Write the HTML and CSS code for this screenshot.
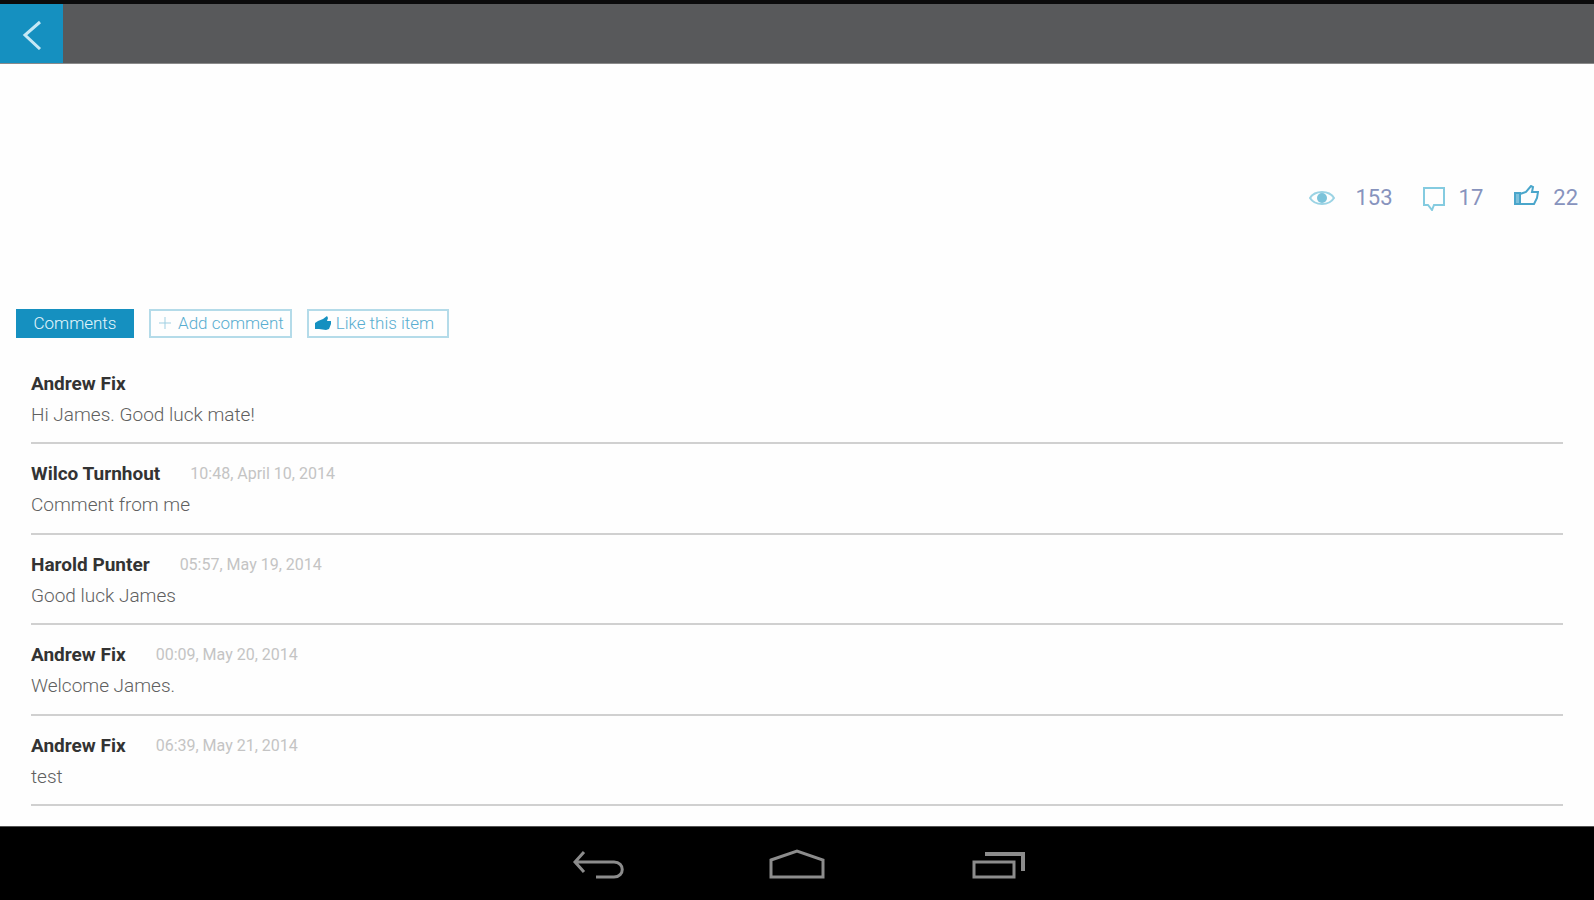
FILE: index.html
```html
<!DOCTYPE html>
<html lang="en">
<head>
  <meta charset="UTF-8">
  <meta name="viewport" content="width=device-width, initial-scale=1.0">
  <title>Comments</title>
  <link rel="stylesheet" href="styles.css">
</head>
<body>
  <header class="top-bar">
    <button class="back-button" type="button" aria-label="Back">
      <svg width="20" height="32" viewBox="0 0 20 32"><path d="M18 4 L3 17 L18 31"/></svg>
    </button>
  </header>

  <main class="content">
    <div class="stats">
      <span class="stat">
        <svg class="eye" width="26" height="18" viewBox="0 0 26 18">
          <path d="M1 9 C6 1 20 1 25 9 C20 17 6 17 1 9 Z"/>
          <circle cx="13" cy="9" r="5"/>
        </svg>
        153
      </span>
      <span class="stat">
        <svg class="bubble" width="22" height="26" viewBox="0 0 22 26">
          <path d="M1 3 H21 V20 H11 L9 25 L5 20 H1 Z"/>
        </svg>
        17
      </span>
      <span class="stat">
        <svg class="thumb" width="26" height="26" viewBox="0 0 26 26">
          <path class="cuff" d="M2 8 H7 V19 H2 Z"/>
          <path d="M7 9 L13 7 L18 1 L20 2 L19 7 H25 L24 13 L21 19 H7"/>
        </svg>
        22
      </span>
    </div>

    <div class="actions">
      <button class="action active" type="button">Comments</button>
      <button class="action" type="button">
        <svg width="16" height="16" viewBox="0 0 16 16"><path class="plus" d="M8 2 V14 M2 8 H14"/></svg>
        Add comment
      </button>
      <button class="action" type="button">
        <svg width="16" height="16" viewBox="0 0 16 16"><path d="M0 8 L3 6 L8 4 L12 1 L13 3 L12 6 H16 V9 L14 14 L11 15 L4 14 L0 14 Z"/></svg>
        Like this item
      </button>
    </div>

    <ul class="comments">
      <li class="comment">
        <div class="comment-head"><strong>Andrew Fix</strong></div>
        <p>Hi James. Good luck mate!</p>
      </li>
      <li class="comment">
        <div class="comment-head"><strong>Wilco Turnhout</strong><time>10:48, April 10, 2014</time></div>
        <p>Comment from me</p>
      </li>
      <li class="comment">
        <div class="comment-head"><strong>Harold Punter</strong><time>05:57, May 19, 2014</time></div>
        <p>Good luck James</p>
      </li>
      <li class="comment">
        <div class="comment-head"><strong>Andrew Fix</strong><time>00:09, May 20, 2014</time></div>
        <p>Welcome James.</p>
      </li>
      <li class="comment">
        <div class="comment-head"><strong>Andrew Fix</strong><time>06:39, May 21, 2014</time></div>
        <p>test</p>
      </li>
    </ul>
  </main>

  <nav class="system-bar">
    <button type="button" aria-label="Back">
      <svg width="56" height="32" viewBox="0 0 56 32"><path d="M15 4 L6 14 L15 24 M6 14 H45 C56 14 56 29 45 29 H27"/></svg>
    </button>
    <button type="button" aria-label="Home">
      <svg width="56" height="32" viewBox="0 0 56 32"><path d="M2 12 L28 3 L54 12 V29 H2 Z"/></svg>
    </button>
    <button type="button" aria-label="Recent apps">
      <svg width="56" height="32" viewBox="0 0 56 32"><path d="M5 14 H45 V29 H5 Z"/><path class="stacked" d="M16 6 H54 V23"/></svg>
    </button>
  </nav>
</body>
</html>
```

FILE: styles.css
```css
* {
  box-sizing: border-box;
}

body {
  margin: 0;
  min-height: 100vh;
  display: flex;
  flex-direction: column;
  font-family: Roboto, sans-serif;
  background-color: #fefefe;
  color: #777;
}

button {
  display: flex;
  align-items: center;
  justify-content: center;
  padding: 0;
  border: none;
  background: none;
  font-family: inherit;
  cursor: pointer;
}

svg {
  display: block;
  flex: none;
}

.top-bar {
  height: 64px;
  display: flex;
  border-top: 4px solid #0b0b0c;
  border-bottom: 1px solid #8a8a8a;
  background-color: #58595b;
}

.back-button {
  width: 63px;
  background-color: #1590c0;
}

.back-button path {
  fill: none;
  stroke: #c5e8f5;
  stroke-width: 3;
}

.content {
  flex: 1;
  display: flex;
  flex-direction: column;
  padding: 114px 16px 20px;
}

.stats {
  display: flex;
  justify-content: flex-end;
  gap: 30px;
  font-size: 22px;
  line-height: 40px;
  color: #8793bd;
}

.stat {
  display: flex;
  align-items: center;
  gap: 14px;
}

.eye {
  margin-right: 6px;
}

.stat path {
  fill: none;
  stroke-width: 2;
}

.eye path {
  stroke: #9bd3e4;
}

.eye circle {
  fill: #7cc3da;
}

.bubble path {
  stroke: #84cbe0;
}

.thumb path {
  stroke: #4aa6cb;
}

.thumb .cuff {
  fill: #7fc1db;
}

.actions {
  display: flex;
  gap: 15px;
  margin-top: 91px;
}

.action {
  min-width: 142px;
  height: 29px;
  justify-content: flex-start;
  padding: 0 6px 2px;
  gap: 5px;
  border: 2px solid #b4dbe9;
  font-size: 17px;
  font-weight: 300;
  color: #58add0;
}

.action path {
  fill: #1590c0;
}

.action .plus {
  stroke: #9fcfe2;
}

.action.active {
  min-width: 118px;
  justify-content: center;
  border-color: #1590c0;
  background-color: #1590c0;
  color: #e4f6fc;
}

.comments {
  flex: 1;
  display: flex;
  flex-direction: column;
  margin: 16px 15px 0;
  padding: 0;
  list-style: none;
}

.comment {
  flex: 1;
  padding-top: 16px;
  border-bottom: 2px solid #d0d0d0;
}

.comment-head {
  display: flex;
  align-items: center;
  gap: 30px;
  line-height: 28px;
}

.comment strong {
  font-size: 19px;
  font-weight: 700;
  color: #333;
}

.comment time {
  font-size: 16px;
  color: #c4c4c4;
}

.comment p {
  margin: 2px 0 0;
  font-size: 19px;
  font-weight: 300;
  line-height: 30px;
  color: #606060;
}

.system-bar {
  height: 74px;
  display: flex;
  align-items: center;
  justify-content: center;
  gap: 144px;
  border-top: 1px solid #555;
  background-color: #000;
}

.system-bar path {
  fill: none;
  stroke: #8c8c8c;
  stroke-width: 3;
}

.system-bar .stacked {
  stroke-width: 4;
}
```
